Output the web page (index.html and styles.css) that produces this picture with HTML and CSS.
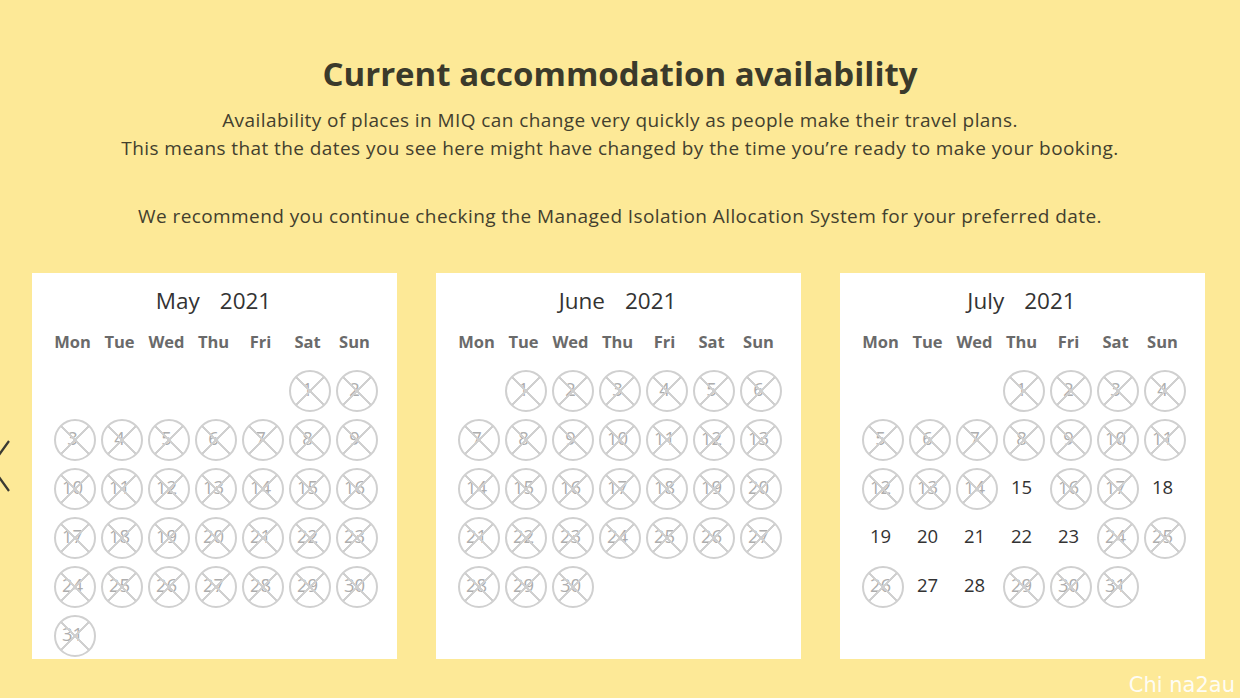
FILE: index.html
```html
<!DOCTYPE html>
<html lang="en">
<head>
<meta charset="utf-8">
<title>Current accommodation availability</title>
<link rel="stylesheet" href="styles.css">
</head>
<body>
<main class="page">
  <header class="intro">
    <h1 class="title">Current accommodation availability</h1>
    <p class="lead">Availability of places in MIQ can change very quickly as people make their travel plans.<br>This means that the dates you see here might have changed by the time you’re ready to make your booking.</p>
    <p class="lead note">We recommend you continue checking the Managed Isolation Allocation System for your preferred date.</p>
  </header>

  <section class="calendars">
    <div class="card">
      <div class="month"><span>May</span><span>2021</span></div>
      <div class="grid">
        <div class="wd">Mon</div><div class="wd">Tue</div><div class="wd">Wed</div><div class="wd">Thu</div><div class="wd">Fri</div><div class="wd">Sat</div><div class="wd">Sun</div>
      </div>
      <div class="grid days">
        <div class="e"></div><div class="e"></div><div class="e"></div><div class="e"></div><div class="e"></div>
        <div class="d x">1</div><div class="d x">2</div>
        <div class="d x">3</div><div class="d x">4</div><div class="d x">5</div><div class="d x">6</div><div class="d x">7</div><div class="d x">8</div><div class="d x">9</div>
        <div class="d x">10</div><div class="d x">11</div><div class="d x">12</div><div class="d x">13</div><div class="d x">14</div><div class="d x">15</div><div class="d x">16</div>
        <div class="d x">17</div><div class="d x">18</div><div class="d x">19</div><div class="d x">20</div><div class="d x">21</div><div class="d x">22</div><div class="d x">23</div>
        <div class="d x">24</div><div class="d x">25</div><div class="d x">26</div><div class="d x">27</div><div class="d x">28</div><div class="d x">29</div><div class="d x">30</div>
        <div class="d x">31</div>
      </div>
    </div>

    <div class="card">
      <div class="month"><span>June</span><span>2021</span></div>
      <div class="grid">
        <div class="wd">Mon</div><div class="wd">Tue</div><div class="wd">Wed</div><div class="wd">Thu</div><div class="wd">Fri</div><div class="wd">Sat</div><div class="wd">Sun</div>
      </div>
      <div class="grid days">
        <div class="e"></div>
        <div class="d x">1</div><div class="d x">2</div><div class="d x">3</div><div class="d x">4</div><div class="d x">5</div><div class="d x">6</div>
        <div class="d x">7</div><div class="d x">8</div><div class="d x">9</div><div class="d x">10</div><div class="d x">11</div><div class="d x">12</div><div class="d x">13</div>
        <div class="d x">14</div><div class="d x">15</div><div class="d x">16</div><div class="d x">17</div><div class="d x">18</div><div class="d x">19</div><div class="d x">20</div>
        <div class="d x">21</div><div class="d x">22</div><div class="d x">23</div><div class="d x">24</div><div class="d x">25</div><div class="d x">26</div><div class="d x">27</div>
        <div class="d x">28</div><div class="d x">29</div><div class="d x">30</div>
      </div>
    </div>

    <div class="card">
      <div class="month"><span>July</span><span>2021</span></div>
      <div class="grid">
        <div class="wd">Mon</div><div class="wd">Tue</div><div class="wd">Wed</div><div class="wd">Thu</div><div class="wd">Fri</div><div class="wd">Sat</div><div class="wd">Sun</div>
      </div>
      <div class="grid days">
        <div class="e"></div><div class="e"></div><div class="e"></div>
        <div class="d x">1</div><div class="d x">2</div><div class="d x">3</div><div class="d x">4</div>
        <div class="d x">5</div><div class="d x">6</div><div class="d x">7</div><div class="d x">8</div><div class="d x">9</div><div class="d x">10</div><div class="d x">11</div>
        <div class="d x">12</div><div class="d x">13</div><div class="d x">14</div><div class="d">15</div><div class="d x">16</div><div class="d x">17</div><div class="d">18</div>
        <div class="d">19</div><div class="d">20</div><div class="d">21</div><div class="d">22</div><div class="d">23</div><div class="d x">24</div><div class="d x">25</div>
        <div class="d x">26</div><div class="d">27</div><div class="d">28</div><div class="d x">29</div><div class="d x">30</div><div class="d x">31</div>
      </div>
    </div>
  </section>

  <svg class="prev" width="12" height="54" viewBox="0 0 12 54" aria-hidden="true">
    <polyline points="9,2 -9,27 9,52" fill="none" stroke="#3a3a32" stroke-width="2.2"/>
  </svg>
  <div class="watermark">Chi na2au</div>
</main>
</body>
</html>
```

FILE: styles.css
```css
* { box-sizing: border-box; }

html, body {
  margin: 0;
  padding: 0;
}

body {
  background: #fde997;
  font-family: "Open Sans", "Noto Sans", sans-serif;
  color: #3d3b2c;
  width: 1240px;
  height: 698px;
  overflow: hidden;
}

.page {
  position: relative;
  width: 1240px;
  height: 698px;
  padding-top: 54px;
}

.intro {
  text-align: center;
}

.title {
  margin: 0;
  font-size: 33px;
  line-height: 40px;
  font-weight: 700;
  color: #3b3a2b;
  letter-spacing: 0;
}

.lead {
  margin: 12px 0 0;
  font-size: 19px;
  line-height: 28px;
  letter-spacing: 0.42px;
  color: #433f2e;
}

.lead.note {
  margin-top: 40px;
}

.calendars {
  display: flex;
  justify-content: center;
  gap: 39px;
  margin-top: 43px;
  padding-right: 3px;
}

.card {
  width: 365px;
  background: #ffffff;
  padding: 13px 19px 1px 17px;
}

.month {
  display: flex;
  justify-content: center;
  gap: 20px;
  font-size: 22.5px;
  line-height: 30px;
  color: #333333;
  margin-bottom: 14px;
}

.grid {
  display: grid;
  grid-template-columns: repeat(7, 47px);
}

.wd {
  text-align: center;
  font-size: 16.5px;
  line-height: 24px;
  font-weight: 700;
  color: #6a6a6a;
}

.days {
  margin-top: 10px;
  grid-auto-rows: 49px;
}

.d {
  display: flex;
  align-items: center;
  justify-content: center;
  font-size: 18.5px;
  color: #333333;
}

.d.x {
  color: #aeaeae;
  position: relative;
}

.d.x::before {
  content: "";
  position: absolute;
  left: 4.5px;
  top: 5.5px;
  width: 38px;
  height: 38px;
  border: 2px solid #d0d0d0;
  border-radius: 50%;
  background:
    linear-gradient(45deg, transparent calc(50% - 1px), #d0d0d0 calc(50% - 1px), #d0d0d0 calc(50% + 1px), transparent calc(50% + 1px)),
    linear-gradient(-45deg, transparent calc(50% - 1px), #d0d0d0 calc(50% - 1px), #d0d0d0 calc(50% + 1px), transparent calc(50% + 1px));
}

.prev {
  position: absolute;
  left: 0;
  top: 439px;
}

.watermark {
  position: absolute;
  right: 5px;
  bottom: 0;
  font-family: "DejaVu Sans", sans-serif;
  font-size: 21px;
  line-height: 26px;
  color: #ffffff;
  opacity: 0.9;
}
```
